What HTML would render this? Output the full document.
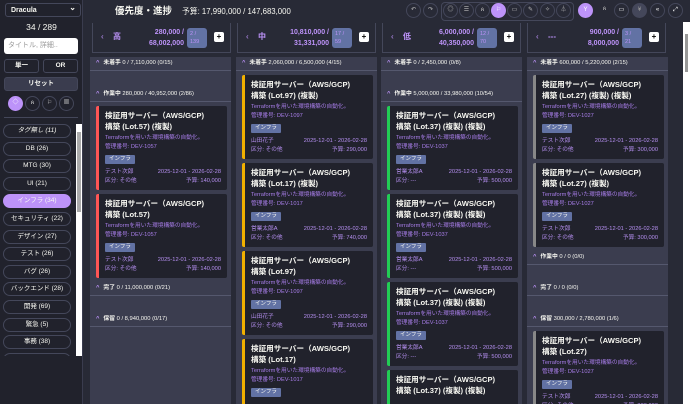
<!DOCTYPE html>
<html><head><meta charset="utf-8"><style>
*{box-sizing:border-box;margin:0;padding:0}
html,body{width:690px;height:404px;overflow:hidden}
body{background:#282a36;font-family:"Liberation Sans","Noto Sans CJK JP",sans-serif;color:#f8f8f2;position:relative}
.sb{position:absolute;left:0;top:0;width:83px;height:404px;background:#21222c;border-right:1px solid #3a3c4e}
.sel{position:absolute;left:5px;top:3px;width:76px;height:14px;border:1px solid #44475a;border-radius:3px;font-size:7px;font-weight:bold;padding:2px 5px;line-height:9px}
.sel:after{content:"⌄";position:absolute;right:4px;top:-1px;font-size:8px}
.cnt{position:absolute;left:0;width:83px;top:22px;text-align:center;font-size:8.5px}
.inp{position:absolute;left:4px;top:38px;width:74px;height:16px;background:#fff;border-radius:3px;color:#999;font-size:7px;padding:3px 4px;line-height:9px}
.btn{position:absolute;height:14px;border:1px solid #44475a;border-radius:3px;font-size:6.5px;text-align:center;line-height:12px;font-weight:bold}
.ic{position:absolute;top:96px;width:15px;height:15px;border-radius:50%;border:1px solid #44475a;font-size:6px;text-align:center;line-height:13px;color:#ccc}
.tags{position:absolute;left:3px;top:124px;width:73px;height:232px;overflow:hidden}
.tag{height:14px;width:68px;border:1px solid #44475a;border-radius:7px;font-size:6.5px;text-align:center;line-height:12px;margin-bottom:3.6px;white-space:nowrap}
.tag.on{background:#bd93f9;border-color:#bd93f9}
.vs{position:absolute;left:76px;top:124px;width:6px;height:232px;background:#fff}
.vs i{position:absolute;left:1px;top:8px;width:4px;height:80px;background:#aaa}
.hd{position:absolute;left:115px;top:5px;font-size:9.5px;font-weight:bold;line-height:13px}
.bud{position:absolute;left:182px;top:7px;font-size:7.8px;line-height:10px}
.ti{position:absolute;top:3px;width:15px;height:15px;border-radius:50%;border:1px solid #44475a;font-size:6px;text-align:center;line-height:13px;color:#bbb}
.grp{position:absolute;left:441px;top:2px;width:133px;height:19px;border:1px solid #44475a;border-radius:4px}
.ch{position:absolute;top:23px;height:30px;border:1px solid #44475a;border-top:none;}
.ch .ar{position:absolute;left:8px;top:9px;font-size:8px;color:#bd93f9;line-height:10px}
.ch .nm{position:absolute;left:20px;top:9px;font-size:8px;color:#bd93f9;font-weight:bold;line-height:10px}
.ch .nu{position:absolute;right:46px;top:4px;font-size:7px;color:#bd93f9;font-weight:bold;text-align:right;line-height:11px}
.ch .bd{position:absolute;right:23px;top:5px;width:20px;height:20px;background:#6272a4;border-radius:3px;font-size:5.5px;color:#bd93f9;padding:2px 3px;line-height:8px}
.ch .pl{position:absolute;right:6px;top:9px;width:10px;height:10px;background:#fff;border-radius:2px;color:#000;font-size:8px;text-align:center;line-height:10px;font-weight:bold}
.col{position:absolute;top:57px;width:141px;height:347px;background:#3b3d4f;overflow:hidden}
.sh{height:14px;border-bottom:1px solid #55586e;font-size:5.8px;padding:0 6px;white-space:nowrap;line-height:13px}
.sh b{color:#bd93f9;margin-right:4px}
.sh span{font-weight:bold}
.em{height:17px}
.cd{margin:4px 4px 0 6px;height:84px;background:#21222c;border-left:3px solid #ff5555;border-radius:2px;padding:4px 6px;overflow:hidden}
.cd.y{border-color:#f1b000}.cd.g{border-color:#22cc55}.cd.n{border-color:#888}
.cd .t{font-size:7.6px;font-weight:bold;line-height:11px;white-space:nowrap;height:22px}
.cd .d{font-size:5.7px;color:#a77de8;line-height:9px;margin-top:2px;white-space:nowrap;height:18px}
.cd .tg{display:block;width:fit-content;height:9px;background:#6272a4;font-size:5.5px;line-height:9px;padding:0 4px;margin-top:3px;border-radius:1px}
.cd .f{display:flex;justify-content:space-between;font-size:5.7px;color:#b58ff0;line-height:9px;height:9px;white-space:nowrap}
.cd .f1{margin-top:4px}
.rs{position:absolute;left:683px;top:22px;width:7px;height:382px;background:#fff}
.rs i{position:absolute;left:2px;top:12px;width:3px;height:38px;background:#999}
</style></head><body>
<div class="sb">
<div class="sel">Dracula</div>
<div class="cnt">34 / 289</div>
<div class="inp">タイトル, 詳細..</div>
<div class="btn" style="left:4px;top:59px;width:35px">単一</div>
<div class="btn" style="left:43px;top:59px;width:35px">OR</div>
<div class="btn" style="left:4px;top:77px;width:74px;background:#3a3c4e">リセット</div>
<div class="ic" style="left:8px;background:#bd93f9;border-color:#bd93f9;color:#fff">◇</div>
<div class="ic" style="left:25px">ጰ</div>
<div class="ic" style="left:42px">⚐</div>
<div class="ic" style="left:59px">▦</div>
<div style="position:absolute;left:4px;top:117px;width:74px;border-top:1px solid #44475a"></div>
<div class="tags">
<div class="tag"><i>タグ無し (11)</i></div><div class="tag">DB (26)</div><div class="tag">MTG (30)</div><div class="tag">UI (21)</div><div class="tag on">インフラ (34)</div><div class="tag">セキュリティ (22)</div><div class="tag">デザイン (27)</div><div class="tag">テスト (26)</div><div class="tag">バグ (26)</div><div class="tag">バックエンド (28)</div><div class="tag">開発 (69)</div><div class="tag">緊急 (5)</div><div class="tag">事務 (38)</div><div class="tag"></div>
</div>
<div class="vs"><i></i></div>
</div>
<div class="hd">優先度・進捗</div>
<div class="bud">予算: 17,990,000 / 147,683,000</div>
<div class="ti" style="left:406px">↶</div><div class="ti" style="left:423px">↷</div>
<div class="grp"></div>
<div class="ti" style="left:443px">◎</div><div class="ti" style="left:459px">☰</div><div class="ti" style="left:475px">ጰ</div>
<div class="ti" style="left:491px;background:#bd93f9;border-color:#bd93f9;color:#fff">⚐</div>
<div class="ti" style="left:507px">▭</div><div class="ti" style="left:523px">✎</div><div class="ti" style="left:540px">✧</div><div class="ti" style="left:556px">⏃</div>
<div class="ti" style="left:578px;background:#bd93f9;border-color:#bd93f9;color:#fff">Y</div>
<div class="ti" style="left:597px;border:none">ጰ</div>
<div class="ti" style="left:614px;color:#fff">▭</div>
<div class="ti" style="left:632px;background:#44475a;color:#999">¥</div>
<div class="ti" style="left:650px;color:#fff">«</div>
<div class="ti" style="left:668px;color:#fff">⤢</div>

<div class="ch" style="left:92px;width:139px"><span class="ar">‹</span><span class="nm">高</span><div class="nu">280,000 /<br>68,002,000</div><div class="bd">2 /<br>139</div><div class="pl">+</div></div>
<div class="ch" style="left:237px;width:139px"><span class="ar">‹</span><span class="nm">中</span><div class="nu">10,810,000 /<br>31,331,000</div><div class="bd">17 /<br>59</div><div class="pl">+</div></div>
<div class="ch" style="left:382px;width:139px"><span class="ar">‹</span><span class="nm">低</span><div class="nu">6,000,000 /<br>40,350,000</div><div class="bd">12 /<br>70</div><div class="pl">+</div></div>
<div class="ch" style="left:527px;width:139px"><span class="ar">‹</span><span class="nm">---</span><div class="nu">900,000 /<br>8,000,000</div><div class="bd">3 /<br>21</div><div class="pl">+</div></div>

<div class="col" style="left:90px">
<div class="sh"><b>^</b><span>未着手</span> 0 / 7,110,000 (0/15)</div><div class="em"></div>
<div class="sh"><b>^</b><span>作業中</span> 280,000 / 40,952,000 (2/86)</div>
<div class="cd"><div class="t">検証用サーバー（AWS/GCP)<br>構築 (Lot.57) (複製)</div><div class="d">Terraformを用いた環境構築の自動化。<br>管理番号: DEV-1057</div><span class="tg">インフラ</span><div class="f f1"><span>テスト次郎</span><span>2025-12-01 - 2026-02-28</span></div><div class="f"><span>区分: その他</span><span>予算: 140,000</span></div></div>
<div class="cd"><div class="t">検証用サーバー（AWS/GCP)<br>構築 (Lot.57)</div><div class="d">Terraformを用いた環境構築の自動化。<br>管理番号: DEV-1057</div><span class="tg">インフラ</span><div class="f f1"><span>テスト次郎</span><span>2025-12-01 - 2026-02-28</span></div><div class="f"><span>区分: その他</span><span>予算: 140,000</span></div></div>
<div style="height:4px"></div>
<div class="sh"><b>^</b><span>完了</span> 0 / 11,000,000 (0/21)</div><div class="em"></div>
<div class="sh"><b>^</b><span>保留</span> 0 / 8,940,000 (0/17)</div>
</div>

<div class="col" style="left:236px">
<div class="sh"><b>^</b><span>未着手</span> 2,060,000 / 6,500,000 (4/15)</div>
<div class="cd y"><div class="t">検証用サーバー（AWS/GCP)<br>構築 (Lot.97) (複製)</div><div class="d">Terraformを用いた環境構築の自動化。<br>管理番号: DEV-1097</div><span class="tg">インフラ</span><div class="f f1"><span>山田花子</span><span>2025-12-01 - 2026-02-28</span></div><div class="f"><span>区分: その他</span><span>予算: 290,000</span></div></div>
<div class="cd y"><div class="t">検証用サーバー（AWS/GCP)<br>構築 (Lot.17) (複製)</div><div class="d">Terraformを用いた環境構築の自動化。<br>管理番号: DEV-1017</div><span class="tg">インフラ</span><div class="f f1"><span>営業太郎A</span><span>2025-12-01 - 2026-02-28</span></div><div class="f"><span>区分: その他</span><span>予算: 740,000</span></div></div>
<div class="cd y"><div class="t">検証用サーバー（AWS/GCP)<br>構築 (Lot.97)</div><div class="d">Terraformを用いた環境構築の自動化。<br>管理番号: DEV-1097</div><span class="tg">インフラ</span><div class="f f1"><span>山田花子</span><span>2025-12-01 - 2026-02-28</span></div><div class="f"><span>区分: その他</span><span>予算: 290,000</span></div></div>
<div class="cd y"><div class="t">検証用サーバー（AWS/GCP)<br>構築 (Lot.17)</div><div class="d">Terraformを用いた環境構築の自動化。<br>管理番号: DEV-1017</div><span class="tg">インフラ</span></div>
</div>

<div class="col" style="left:381px">
<div class="sh"><b>^</b><span>未着手</span> 0 / 2,450,000 (0/8)</div><div class="em"></div>
<div class="sh"><b>^</b><span>作業中</span> 5,000,000 / 33,980,000 (10/54)</div>
<div class="cd g"><div class="t">検証用サーバー（AWS/GCP)<br>構築 (Lot.37) (複製) (複製)</div><div class="d">Terraformを用いた環境構築の自動化。<br>管理番号: DEV-1037</div><span class="tg">インフラ</span><div class="f f1"><span>営業太郎A</span><span>2025-12-01 - 2026-02-28</span></div><div class="f"><span>区分: ---</span><span>予算: 500,000</span></div></div>
<div class="cd g"><div class="t">検証用サーバー（AWS/GCP)<br>構築 (Lot.37) (複製) (複製)</div><div class="d">Terraformを用いた環境構築の自動化。<br>管理番号: DEV-1037</div><span class="tg">インフラ</span><div class="f f1"><span>営業太郎A</span><span>2025-12-01 - 2026-02-28</span></div><div class="f"><span>区分: ---</span><span>予算: 500,000</span></div></div>
<div class="cd g"><div class="t">検証用サーバー（AWS/GCP)<br>構築 (Lot.37) (複製) (複製)</div><div class="d">Terraformを用いた環境構築の自動化。<br>管理番号: DEV-1037</div><span class="tg">インフラ</span><div class="f f1"><span>営業太郎A</span><span>2025-12-01 - 2026-02-28</span></div><div class="f"><span>区分: ---</span><span>予算: 500,000</span></div></div>
<div class="cd g"><div class="t">検証用サーバー（AWS/GCP)<br>構築 (Lot.37) (複製) (複製)</div></div>
</div>

<div class="col" style="left:527px">
<div class="sh"><b>^</b><span>未着手</span> 600,000 / 5,220,000 (2/15)</div>
<div class="cd n"><div class="t">検証用サーバー（AWS/GCP)<br>構築 (Lot.27) (複製) (複製)</div><div class="d">Terraformを用いた環境構築の自動化。<br>管理番号: DEV-1027</div><span class="tg">インフラ</span><div class="f f1"><span>テスト次郎</span><span>2025-12-01 - 2026-02-28</span></div><div class="f"><span>区分: その他</span><span>予算: 300,000</span></div></div>
<div class="cd n"><div class="t">検証用サーバー（AWS/GCP)<br>構築 (Lot.27) (複製)</div><div class="d">Terraformを用いた環境構築の自動化。<br>管理番号: DEV-1027</div><span class="tg">インフラ</span><div class="f f1"><span>テスト次郎</span><span>2025-12-01 - 2026-02-28</span></div><div class="f"><span>区分: その他</span><span>予算: 300,000</span></div></div>
<div style="height:4px"></div>
<div class="sh"><b>^</b><span>作業中</span> 0 / 0 (0/0)</div><div class="em"></div>
<div class="sh"><b>^</b><span>完了</span> 0 / 0 (0/0)</div><div class="em"></div>
<div class="sh"><b>^</b><span>保留</span> 300,000 / 2,780,000 (1/6)</div>
<div class="cd n"><div class="t">検証用サーバー（AWS/GCP)<br>構築 (Lot.27)</div><div class="d">Terraformを用いた環境構築の自動化。<br>管理番号: DEV-1027</div><span class="tg">インフラ</span><div class="f f1"><span>テスト次郎</span><span>2025-12-01 - 2026-02-28</span></div><div class="f"><span>区分: その他</span><span>予算: 300,000</span></div></div>
</div>
<div class="rs"><i></i></div>
</body></html>
